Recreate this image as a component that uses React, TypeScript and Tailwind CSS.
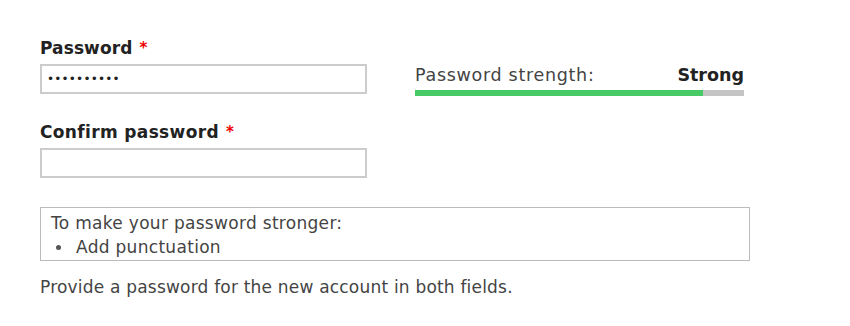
import React from 'react';

const Required = () => <span className="text-[#e00] ml-[7px] text-[15px] align-top">*</span>;

const App: React.FC = () => {
  return (
    <div className="w-[850px] h-[326px] bg-white pl-10 pt-[38px] text-[#333]" style={{ fontFamily: '"DejaVu Sans", sans-serif' }}>
      <div className="flex items-start">
        <div className="w-[327px]">
          <label className="block font-bold text-[17px] leading-[20px] tracking-[0.1px] text-[#222]">
            Password<Required />
          </label>
          <div className="mt-[6px] h-[30px] border-2 border-[#ccc] bg-white px-[5px] flex items-center text-[12px] tracking-[0.2px] text-[#222]">
            ••••••••••
          </div>
        </div>
        <div className="ml-[48px] mt-[27px] w-[329px]">
          <div className="flex justify-between text-[17.5px] leading-[20px]">
            <span className="text-[#444] tracking-[0.7px]">Password strength:</span>
            <span className="font-bold text-[#222]">Strong</span>
          </div>
          <div className="mt-[5px] h-[6px] bg-[#c4c4c4] flex">
            <div className="h-full bg-[#47c965] w-[288px]" />
          </div>
        </div>
      </div>

      <div className="mt-[26px] w-[327px]">
        <label className="block font-bold text-[17px] leading-[20px] tracking-[0.35px] text-[#222]">
          Confirm password<Required />
        </label>
        <div className="mt-[6px] h-[30px] border-2 border-[#ccc] bg-white" />
      </div>

      <div className="mt-[29px] w-[710px] border border-[#bbb] px-[10px] pt-[3px] pb-[1px] text-[17px] leading-[24px] tracking-[0.3px] text-[#444]">
        <div>To make your password stronger:</div>
        <ul>
          <li className="flex items-center">
            <span className="ml-[5px] mr-[15px] w-[5px] h-[5px] rounded-full bg-[#555]" />
            Add punctuation
          </li>
        </ul>
      </div>

      <p className="mt-[16px] text-[17px] leading-[20px] tracking-[0.2px] text-[#444]">
        Provide a password for the new account in both fields.
      </p>
    </div>
  );
};

export default App;
